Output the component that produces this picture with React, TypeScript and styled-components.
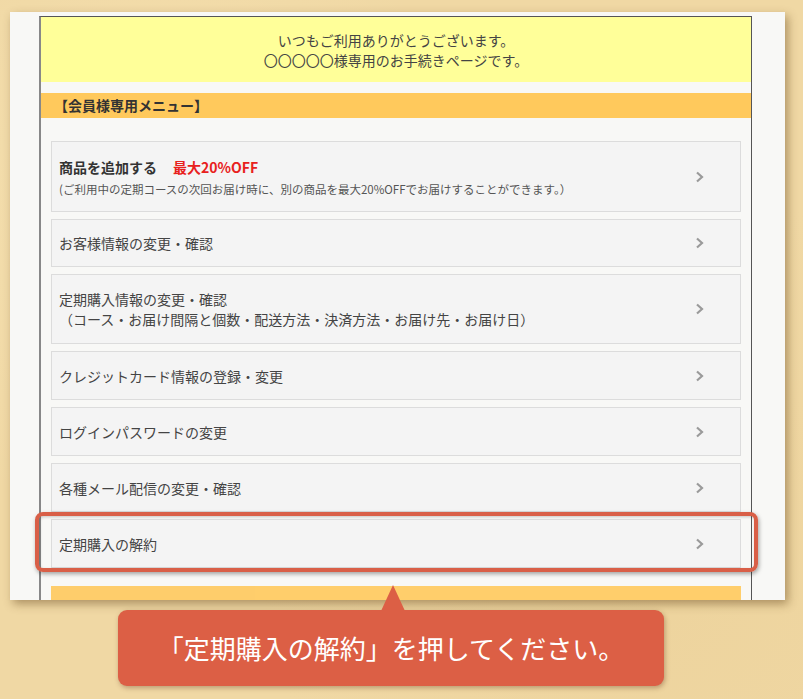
import styled, { createGlobalStyle } from "styled-components";

//# 전체 기본 스타일
const GlobalStyle = createGlobalStyle`
  * { box-sizing: border-box; }
  body {
    margin: 0;
    background: #f0d8a4;
    font-family: "Noto Sans CJK JP", "Noto Sans", sans-serif;
  }
`;

const Page = styled.div`
  width: 803px;
  height: 699px;
  padding: 12px 0 0 10px;
  overflow: hidden;
  background:
    radial-gradient(circle at 20% 30%, rgba(255, 240, 200, 0.35), transparent 40%),
    radial-gradient(circle at 80% 80%, rgba(230, 200, 140, 0.3), transparent 45%),
    #f0d8a4;
`;

const Panel = styled.div`
  width: 775px;
  height: 588px;
  padding: 4px 0 0 29px;
  background: #f8f8f6;
  box-shadow: 3px 4px 9px rgba(90, 60, 20, 0.45);
  overflow: hidden;
`;

const Frame = styled.div`
  width: 713px;
  height: 100%;
  border: 1px solid #555;
  border-left: 2px solid #888;
  border-bottom: none;
`;

const Welcome = styled.div`
  height: 65px;
  padding-top: 13px;
  background: #ffff99;
  color: #444;
  font-size: 14px;
  line-height: 20px;
  text-align: center;
`;

const SectionBar = styled.div<{ $inset?: boolean }>`
  height: 25px;
  margin: ${({ $inset }) => ($inset ? "18px 10px 0" : "11px 0 0")};
  padding: ${({ $inset }) => ($inset ? "9px 0 0 7px" : "0 0 0 13px")};
  background: #ffc95c;
  color: #333;
  font-size: 14px;
  font-weight: bold;
  line-height: 25px;
  opacity: ${({ $inset }) => ($inset ? 0.9 : 1)};
`;

const MenuList = styled.div`
  display: flex;
  flex-direction: column;
  gap: 7px;
  padding: 23px 10px 0;
`;

const MenuItem = styled.div<{ $h?: number }>`
  position: relative;
  display: flex;
  align-items: center;
  height: ${({ $h }) => $h ?? 49}px;
  padding: 0 36px 0 7px;
  background: #f4f4f4;
  border: 1px solid #dcdcdc;
  color: #444;
  font-size: 14px;
  line-height: 20px;
`;

const ItemText = styled.div`
  flex: 1;
`;

const ItemTitle = styled.div`
  color: #333;
  font-weight: bold;
  line-height: 22px;
`;

const Discount = styled.span`
  margin-left: 16px;
  color: #e8211d;
`;

const ItemNote = styled.div`
  margin-top: 2px;
  color: #555;
  font-size: 11.5px;
  line-height: 18px;
`;

const Highlight = styled.div`
  position: absolute;
  top: -8px;
  left: -17px;
  right: -18px;
  bottom: -5px;
  border: 4px solid #d95f47;
  border-radius: 8px;
  box-shadow: 1px 2px 4px rgba(0, 0, 0, 0.35), inset 1px 1px 3px rgba(0, 0, 0, 0.2);
  pointer-events: none;
`;

const Callout = styled.div`
  position: relative;
  z-index: 1;
  width: 546px;
  height: 76px;
  margin: 10px 0 0 108px;
  border-radius: 9px;
  background: #dc5f45;
  box-shadow: 1px 2px 5px rgba(90, 40, 20, 0.35);
  color: #fff;
  font-size: 26px;
  font-weight: 400;
  line-height: 76px;
  text-align: center;

  &::before {
    content: "";
    position: absolute;
    top: -25px;
    left: 263px;
    border-left: 12px solid transparent;
    border-right: 12px solid transparent;
    border-bottom: 26px solid #dc5f45;
  }
`;

function Chevron() {
  return (
    <svg width="9" height="12" viewBox="0 0 9 12">
      <path d="M2 1.5 L7 6 L2 10.5" fill="none" stroke="#9a9a9a" strokeWidth="2.2" />
    </svg>
  );
}

const items: { label: string; sub?: string; h?: number }[] = [
  { label: "お客様情報の変更・確認", h: 48 },
  {
    label: "定期購入情報の変更・確認",
    sub: "（コース・お届け間隔と個数・配送方法・決済方法・お届け先・お届け日）",
    h: 70,
  },
  { label: "クレジットカード情報の登録・変更" },
  { label: "ログインパスワードの変更" },
  { label: "各種メール配信の変更・確認" },
];

export default function App() {
  return (
    <Page>
      <GlobalStyle />
      <Panel>
        <Frame>
          <Welcome>
            いつもご利用ありがとうございます。
            <br />
            〇〇〇〇〇様専用のお手続きページです。
          </Welcome>
          <SectionBar>【会員様専用メニュー】</SectionBar>
          <MenuList>
            <MenuItem $h={71}>
              <ItemText>
                <ItemTitle>
                  商品を追加する<Discount>最大20%OFF</Discount>
                </ItemTitle>
                <ItemNote>
                  (ご利用中の定期コースの次回お届け時に、別の商品を最大20%OFFでお届けすることができます。）
                </ItemNote>
              </ItemText>
              <Chevron />
            </MenuItem>
            {items.map((item) => (
              <MenuItem key={item.label} $h={item.h}>
                <ItemText>
                  {item.label}
                  {item.sub && (
                    <>
                      <br />
                      {item.sub}
                    </>
                  )}
                </ItemText>
                <Chevron />
              </MenuItem>
            ))}
            <MenuItem>
              <ItemText>定期購入の解約</ItemText>
              <Chevron />
              <Highlight />
            </MenuItem>
          </MenuList>
          <SectionBar $inset>【その他のお手続き】</SectionBar>
        </Frame>
      </Panel>
      <Callout>「定期購入の解約」を押してください。</Callout>
    </Page>
  );
}
